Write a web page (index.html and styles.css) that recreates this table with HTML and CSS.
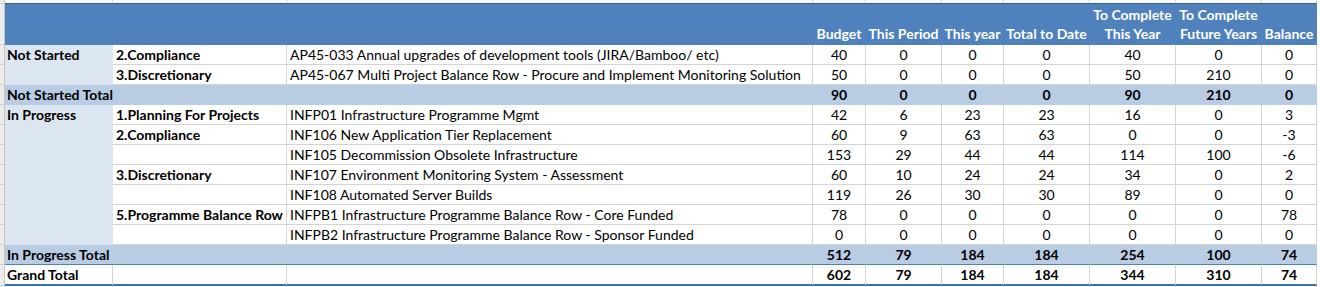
FILE: index.html
```html
<!DOCTYPE html>
<html>
<head>
<meta charset="utf-8">
<link rel="stylesheet" href="styles.css">
</head>
<body>
<table class="sheet">
  <colgroup>
    <col class="w-strip"><col class="w-a"><col class="w-b"><col class="w-c">
    <col class="w-d"><col class="w-e"><col class="w-f"><col class="w-g">
    <col class="w-h"><col class="w-i"><col class="w-j">
  </colgroup>
  <tr class="edge">
    <td class="strip"></td><td></td><td></td><td></td><td></td><td></td><td></td><td></td><td></td><td></td><td></td>
  </tr>
  <tr class="head">
    <td class="strip"></td>
    <th></th><th></th><th></th>
    <th>Budget</th><th>This Period</th><th>This year</th><th>Total to Date</th>
    <th>To Complete<br>This Year</th><th>To Complete<br>Future Years</th><th>Balance</th>
  </tr>
  <tr class="row">
    <td class="strip"></td>
    <td class="lab" rowspan="2">Not Started</td>
    <td class="cat">2.Compliance</td>
    <td class="desc">AP45-033 Annual upgrades of development tools (JIRA/Bamboo/ etc)</td>
    <td>40</td><td>0</td><td>0</td><td>0</td><td>40</td><td>0</td><td>0</td>
  </tr>
  <tr class="row">
    <td class="strip"></td>
    <td class="cat">3.Discretionary</td>
    <td class="desc">AP45-067 Multi Project Balance Row - Procure and Implement Monitoring Solution</td>
    <td>50</td><td>0</td><td>0</td><td>0</td><td>50</td><td>210</td><td>0</td>
  </tr>
  <tr class="total">
    <td class="strip"></td>
    <td class="tlab" colspan="3">Not Started Total</td>
    <td>90</td><td>0</td><td>0</td><td>0</td><td>90</td><td>210</td><td>0</td>
  </tr>
  <tr class="row">
    <td class="strip"></td>
    <td class="lab" rowspan="7">In Progress</td>
    <td class="cat">1.Planning For Projects</td>
    <td class="desc">INFP01 Infrastructure Programme Mgmt</td>
    <td>42</td><td>6</td><td>23</td><td>23</td><td>16</td><td>0</td><td>3</td>
  </tr>
  <tr class="row">
    <td class="strip"></td>
    <td class="cat">2.Compliance</td>
    <td class="desc">INF106 New Application Tier Replacement</td>
    <td>60</td><td>9</td><td>63</td><td>63</td><td>0</td><td>0</td><td>-3</td>
  </tr>
  <tr class="row">
    <td class="strip"></td>
    <td class="cat"></td>
    <td class="desc">INF105 Decommission Obsolete Infrastructure</td>
    <td>153</td><td>29</td><td>44</td><td>44</td><td>114</td><td>100</td><td>-6</td>
  </tr>
  <tr class="row">
    <td class="strip"></td>
    <td class="cat">3.Discretionary</td>
    <td class="desc">INF107 Environment Monitoring System - Assessment</td>
    <td>60</td><td>10</td><td>24</td><td>24</td><td>34</td><td>0</td><td>2</td>
  </tr>
  <tr class="row">
    <td class="strip"></td>
    <td class="cat"></td>
    <td class="desc">INF108 Automated Server Builds</td>
    <td>119</td><td>26</td><td>30</td><td>30</td><td>89</td><td>0</td><td>0</td>
  </tr>
  <tr class="row">
    <td class="strip"></td>
    <td class="cat">5.Programme Balance Row</td>
    <td class="desc">INFPB1 Infrastructure Programme Balance Row - Core Funded</td>
    <td>78</td><td>0</td><td>0</td><td>0</td><td>0</td><td>0</td><td>78</td>
  </tr>
  <tr class="row">
    <td class="strip"></td>
    <td class="cat"></td>
    <td class="desc">INFPB2 Infrastructure Programme Balance Row - Sponsor Funded</td>
    <td>0</td><td>0</td><td>0</td><td>0</td><td>0</td><td>0</td><td>0</td>
  </tr>
  <tr class="total last-total">
    <td class="strip"></td>
    <td class="tlab" colspan="3">In Progress Total</td>
    <td>512</td><td>79</td><td>184</td><td>184</td><td>254</td><td>100</td><td>74</td>
  </tr>
  <tr class="grand">
    <td class="strip"></td>
    <td class="tlab">Grand Total</td><td></td><td></td>
    <td>602</td><td>79</td><td>184</td><td>184</td><td>344</td><td>310</td><td>74</td>
  </tr>
  <tr class="edge">
    <td class="strip"></td><td></td><td></td><td></td><td></td><td></td><td></td><td></td><td></td><td></td><td></td>
  </tr>
</table>
</body>
</html>
```
FILE: styles.css
```css
body {
  margin: 0;
  background: #ffffff;
  font-family: Lato, "Liberation Sans", sans-serif;
  font-size: 14px;
  color: #000000;
}

.sheet {
  border-collapse: separate;
  border-spacing: 0;
  table-layout: fixed;
  width: 1317px;
}

.w-strip { width: 5px; }
.w-a { width: 108px; }
.w-b { width: 174px; }
.w-c { width: 526px; }
.w-d { width: 53px; }
.w-e { width: 76px; }
.w-f { width: 62px; }
.w-g { width: 86px; }
.w-h { width: 86px; }
.w-i { width: 86px; }
.w-j { width: 55px; }

.sheet td,
.sheet th {
  padding: 0 0 1px 0;
  box-sizing: border-box;
  white-space: nowrap;
  overflow: visible;
  vertical-align: bottom;
  line-height: 17px;
  text-align: center;
  border-right: 1px solid #d4d4d4;
  border-bottom: 1px solid #d4d4d4;
}

.sheet .strip {
  background: #ececec;
  border-right: 1px solid #c6c6c6;
  border-bottom: 1px solid #cfcfcf;
  padding: 0;
}

/* partial grid rows above / below the table */
.edge td {
  height: 3px;
  border-bottom: none;
  padding: 0;
}
.edge td.strip { border-bottom: none; }

/* header */
.head { height: 42px; }
.head th {
  background: #4f81bd;
  color: #ffffff;
  font-weight: bold;
  border-top: 1px solid #365f91;
  border-right: 1px solid #4f81bd;
  border-bottom: none;
  line-height: 19px;
  padding-bottom: 2px;
}
.head td.strip {
  border-top: 1px solid #cfcfcf;
}

.row { height: 20px; }
.total { height: 20px; }
.grand { height: 21px; }

.sheet .lab {
  background: #dce6f1;
  border-right-color: #dce6f1;
  border-bottom-color: #dce6f1;
  text-align: left;
  vertical-align: top;
  font-weight: bold;
  padding: 1px 0 0 2px;
}

.sheet .cat {
  text-align: left;
  font-weight: bold;
  padding-left: 3px;
}

.sheet .desc {
  text-align: left;
  padding-left: 3px;
}

.total td {
  background: #b8cce4;
  font-weight: bold;
  border-right-color: #b8cce4;
  border-bottom-color: #b8cce4;
}
.total td.strip {
  background: #ececec;
  border-right-color: #c6c6c6;
  border-bottom-color: #cfcfcf;
}
.last-total td {
  border-bottom: 1px solid #4f81bd;
}
.last-total td.strip { border-bottom: 1px solid #cfcfcf; }

.sheet .tlab {
  text-align: left;
  padding-left: 2px;
}

.grand td {
  font-weight: bold;
  border-bottom: 2px solid #3f6fae;
}
.grand td.strip {
  border-bottom: 1px solid #cfcfcf;
}
```
